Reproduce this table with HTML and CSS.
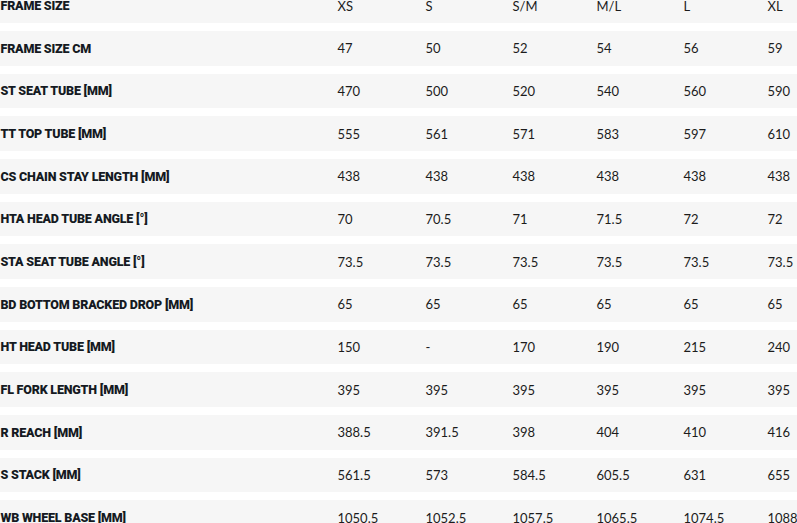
FILE: index.html
```html
<!DOCTYPE html>
<html lang="en">
<head>
<meta charset="utf-8">
<title>Geometry</title>
<link rel="stylesheet" href="styles.css">
</head>
<body>
<div class="geo">
  <div class="row"><div class="lbl">FRAME SIZE</div><div>XS</div><div>S</div><div>S/M</div><div>M/L</div><div>L</div><div>XL</div></div>
  <div class="row"><div class="lbl">FRAME SIZE CM</div><div>47</div><div>50</div><div>52</div><div>54</div><div>56</div><div>59</div></div>
  <div class="row"><div class="lbl">ST SEAT TUBE [MM]</div><div>470</div><div>500</div><div>520</div><div>540</div><div>560</div><div>590</div></div>
  <div class="row"><div class="lbl">TT TOP TUBE [MM]</div><div>555</div><div>561</div><div>571</div><div>583</div><div>597</div><div>610</div></div>
  <div class="row"><div class="lbl">CS CHAIN STAY LENGTH [MM]</div><div>438</div><div>438</div><div>438</div><div>438</div><div>438</div><div>438</div></div>
  <div class="row"><div class="lbl">HTA HEAD TUBE ANGLE [°]</div><div>70</div><div>70.5</div><div>71</div><div>71.5</div><div>72</div><div>72</div></div>
  <div class="row"><div class="lbl">STA SEAT TUBE ANGLE [°]</div><div>73.5</div><div>73.5</div><div>73.5</div><div>73.5</div><div>73.5</div><div>73.5</div></div>
  <div class="row"><div class="lbl">BD BOTTOM BRACKED DROP [MM]</div><div>65</div><div>65</div><div>65</div><div>65</div><div>65</div><div>65</div></div>
  <div class="row"><div class="lbl">HT HEAD TUBE [MM]</div><div>150</div><div>-</div><div>170</div><div>190</div><div>215</div><div>240</div></div>
  <div class="row"><div class="lbl">FL FORK LENGTH [MM]</div><div>395</div><div>395</div><div>395</div><div>395</div><div>395</div><div>395</div></div>
  <div class="row"><div class="lbl">R REACH [MM]</div><div>388.5</div><div>391.5</div><div>398</div><div>404</div><div>410</div><div>416</div></div>
  <div class="row"><div class="lbl">S STACK [MM]</div><div>561.5</div><div>573</div><div>584.5</div><div>605.5</div><div>631</div><div>655</div></div>
  <div class="row"><div class="lbl">WB WHEEL BASE [MM]</div><div>1050.5</div><div>1052.5</div><div>1057.5</div><div>1065.5</div><div>1074.5</div><div>1088</div></div>
</div>
</body>
</html>
```
FILE: styles.css
```css
html, body {
  margin: 0;
  padding: 0;
  background: #ffffff;
  overflow: hidden;
}
.geo {
  display: flex;
  flex-direction: column;
  gap: 8px;
  margin-top: -11.67px;
  font-family: "Lato", "Liberation Sans", sans-serif;
  color: #1c1c1c;
}
.row {
  display: grid;
  grid-template-columns: 337px 88px 87px 84px 87px 84px 1fr;
  align-items: center;
  height: 34.67px;
  background: #f6f6f6;
  font-size: 13px;
  white-space: nowrap;
}
.row > div {
  padding-left: 0.5px;
}
.lbl {
  font-family: "Roboto", "Liberation Sans", sans-serif;
  font-weight: 900;
  font-size: 12.5px;
  letter-spacing: -0.2px;
  color: #151a22;
}
```
